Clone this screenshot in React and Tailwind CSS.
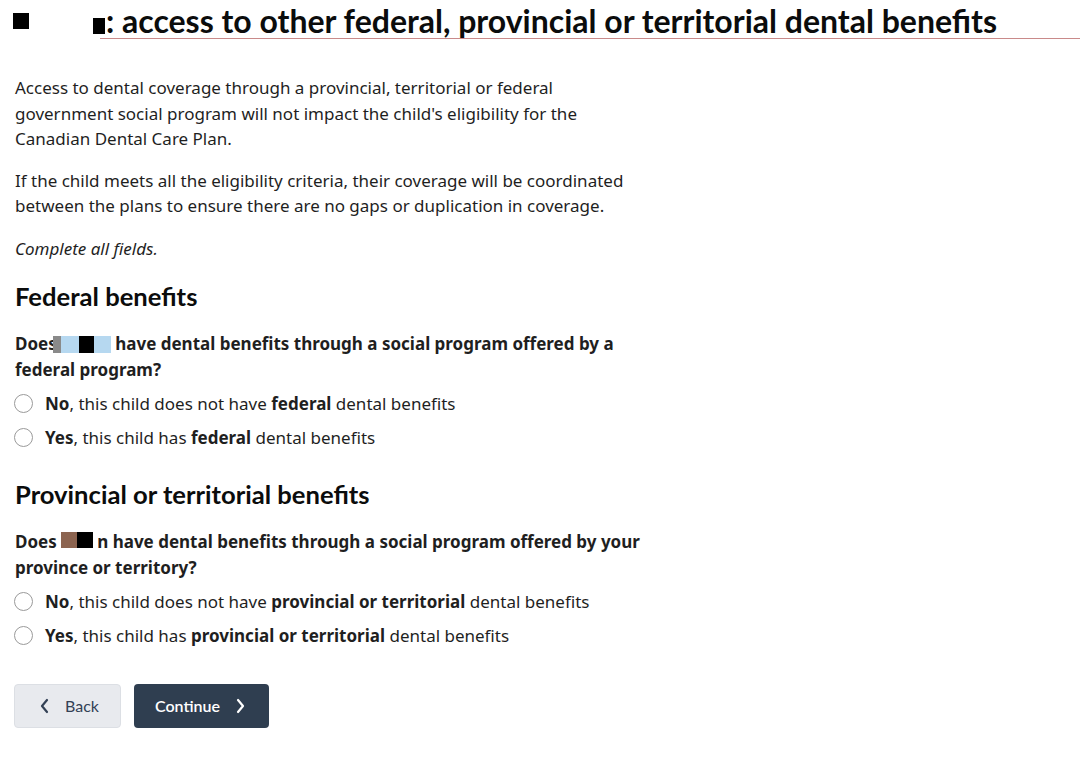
import React from "react";

const body = { fontFamily: '"Noto Sans", "Open Sans", sans-serif' };
const head = { fontFamily: 'Lato, "Noto Sans", sans-serif' };

function Radio({ children }) {
  return (
    <label className="flex h-[34px] items-center gap-[12px] text-[17px] text-[#1f1f1f]">
      <span className="ml-[-1px] inline-block h-[19px] w-[19px] rounded-full border border-[#9a9a9a] bg-white" />
      <span>{children}</span>
    </label>
  );
}

function Question({ children }) {
  return (
    <p className="mt-[19px] w-[645px] text-[17px] font-bold leading-[26px] text-[#1f1f1f]">
      {children}
    </p>
  );
}

export default function App() {
  return (
    <div className="min-h-screen bg-white" style={body}>
      <div className="flex items-start">
        <span className="ml-[13px] mt-[13px] inline-block h-[16px] w-[16px] bg-black" />
        <h1
          className="ml-[71px] flex-1 border-b border-[#c98a8a] pt-[4px] text-[32px] font-bold leading-[34px] text-[#0b0c0c]"
          style={head}
        >
          <span className="ml-[-7px] mr-[1px] inline-block h-[16px] w-[12px] bg-black align-[-1px]" />
          : access to other federal, provincial or territorial dental benefits
        </h1>
      </div>

      <div className="px-[15px]">
        <p className="mt-[36px] w-[600px] text-[17px] leading-[25.6px] text-[#1f1f1f]">
          Access to dental coverage through a provincial, territorial or federal government social
          program will not impact the child's eligibility for the Canadian Dental Care Plan.
        </p>
        <p className="mt-[16px] w-[640px] text-[17px] leading-[25.6px] text-[#1f1f1f]">
          If the child meets all the eligibility criteria, their coverage will be coordinated between
          the plans to ensure there are no gaps or duplication in coverage.
        </p>
        <p className="mt-[17px] text-[17px] italic leading-[25.6px] text-[#1f1f1f]">
          Complete all fields.
        </p>

        <h2 className="mt-[18px] text-[25.6px] font-bold leading-[32px] text-[#0b0c0c]" style={head}>
          Federal benefits
        </h2>
        <Question>
          Does
          <span className="ml-[-4px] inline-flex h-[17px] align-[-3px]">
            <span className="w-[8px] bg-[#8a8a8a]" />
            <span className="w-[18px] bg-[#b6d8f0]" />
            <span className="w-[15px] bg-black" />
            <span className="w-[17px] bg-[#b6d8f0]" />
          </span>{" "}
          have dental benefits through a social program offered by a federal program?
        </Question>
        <div className="mt-[4px]">
          <Radio>
            <b>No</b>, this child does not have <b>federal</b> dental benefits
          </Radio>
          <Radio>
            <b>Yes</b>, this child has <b>federal</b> dental benefits
          </Radio>
        </div>

        <h2 className="mt-[23px] text-[25.6px] font-bold leading-[32px] text-[#0b0c0c]" style={head}>
          Provincial or territorial benefits
        </h2>
        <Question>
          Does
          <span className="inline-flex h-[16px] align-[0px]">
            <span className="w-[4px] bg-white" />
            <span className="w-[16px] bg-[#8c6450]" />
            <span className="w-[16px] bg-black" />
          </span>{" "}
          n have dental benefits through a social program offered by your province or territory?
        </Question>
        <div className="mt-[4px]">
          <Radio>
            <b>No</b>, this child does not have <b>provincial or territorial</b> dental benefits
          </Radio>
          <Radio>
            <b>Yes</b>, this child has <b>provincial or territorial</b> dental benefits
          </Radio>
        </div>

        <div className="mt-[31px] flex gap-[13px]" style={head}>
          <button className="ml-[-1px] flex h-[44px] w-[107px] items-center gap-[14px] rounded-[4px] border border-[#dcdfe4] bg-[#e8eaee] pl-[24px] text-[16px] text-[#334155]">
            <svg width="12" height="16" viewBox="0 0 12 16" fill="none" stroke="#334155" strokeWidth="2.2" strokeLinecap="round" strokeLinejoin="round">
              <path d="M8 2 L3 8 L8 14" />
            </svg>
            Back
          </button>
          <button className="flex h-[44px] w-[135px] items-center gap-[14px] rounded-[4px] bg-[#2f3e50] pl-[21px] text-[16px] font-semibold text-white">
            Continue
            <svg width="12" height="16" viewBox="0 0 12 16" fill="none" stroke="#ffffff" strokeWidth="2.2" strokeLinecap="round" strokeLinejoin="round">
              <path d="M4 2 L9 8 L4 14" />
            </svg>
          </button>
        </div>
      </div>
    </div>
  );
}
